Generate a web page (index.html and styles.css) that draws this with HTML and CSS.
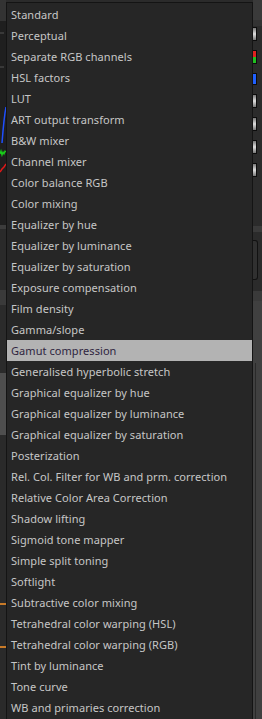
FILE: index.html
```html
<!DOCTYPE html>
<html>
<head>
<meta charset="utf-8">
<link rel="stylesheet" href="styles.css">
</head>
<body>
<div class="backdrop">
  <div class="strip strip-left">
    <div class="blk b-top"></div>
    <div class="blk b-histo">
      <svg width="6" height="204" viewBox="0 0 6 204">
        <line x1="0" y1="12" x2="4" y2="12" stroke="#555" stroke-width="1"/>
        <line x1="0" y1="46" x2="4" y2="46" stroke="#555" stroke-width="1"/>
        <polyline points="2,122 3,110 4,100 5,92 6,86" fill="none" stroke="#1f4fff" stroke-width="1.5"/>
        <polyline points="0,133 1,130 2,134 3,131 4,133 5,130 6,131" fill="none" stroke="#19d219" stroke-width="1.2"/>
        <polyline points="0,151 2,148 4,146 6,143" fill="none" stroke="#e01818" stroke-width="1.5"/>
      </svg>
    </div>
    <div class="blk b-sep"></div>
    <div class="blk b-dark1"></div>
    <div class="blk b-sep2"></div>
    <div class="blk b-dark2"></div>
    <div class="blk b-gray"></div>
    <div class="blk b-dark3">
      <div class="orange o1"></div>
      <div class="orange o2"></div>
    </div>
  </div>
  <div class="center"></div>
  <div class="strip strip-right">
    <div class="blk r-top"></div>
    <div class="blk r-band"></div>
    <div class="blk r-sliders">
      <div class="thumb t1"></div>
      <div class="thumb t2"></div>
      <div class="thumb t3"></div>
      <div class="thumb t4"></div>
      <div class="thumb t5"></div>
      <div class="thumb t6"></div>
      <div class="thumb t7"></div>
    </div>
    <div class="blk r-sep"></div>
    <div class="blk r-dark"><div class="rbox"></div></div>
    <div class="blk r-sep2"></div>
    <div class="blk r-gray"><div class="rline"></div></div>
  </div>
</div>

<ul class="menu">
  <li class="item">Standard</li>
  <li class="item">Perceptual</li>
  <li class="item">Separate RGB channels</li>
  <li class="item">HSL factors</li>
  <li class="item">LUT</li>
  <li class="item">ART output transform</li>
  <li class="item">B&amp;W mixer</li>
  <li class="item">Channel mixer</li>
  <li class="item">Color balance RGB</li>
  <li class="item">Color mixing</li>
  <li class="item">Equalizer by hue</li>
  <li class="item">Equalizer by luminance</li>
  <li class="item">Equalizer by saturation</li>
  <li class="item">Exposure compensation</li>
  <li class="item">Film density</li>
  <li class="item">Gamma/slope</li>
  <li class="item active">Gamut compression</li>
  <li class="item">Generalised hyperbolic stretch</li>
  <li class="item">Graphical equalizer by hue</li>
  <li class="item">Graphical equalizer by luminance</li>
  <li class="item">Graphical equalizer by saturation</li>
  <li class="item">Posterization</li>
  <li class="item">Rel. Col. Filter for WB and prm. correction</li>
  <li class="item">Relative Color Area Correction</li>
  <li class="item">Shadow lifting</li>
  <li class="item">Sigmoid tone mapper</li>
  <li class="item">Simple split toning</li>
  <li class="item">Softlight</li>
  <li class="item">Subtractive color mixing</li>
  <li class="item">Tetrahedral color warping (HSL)</li>
  <li class="item">Tetrahedral color warping (RGB)</li>
  <li class="item">Tint by luminance</li>
  <li class="item">Tone curve</li>
  <li class="item">WB and primaries correction</li>
</ul>
</body>
</html>
```
FILE: styles.css
```css
html, body {
  margin: 0;
  padding: 0;
  width: 262px;
  height: 719px;
  overflow: hidden;
  background: #2b2b2b;
  font-family: "Noto Sans", "Open Sans", sans-serif;
}

.backdrop {
  display: grid;
  grid-template-columns: 6px 1fr 9px;
  height: 719px;
}

.strip {
  display: flex;
  flex-direction: column;
}

.blk {
  flex: none;
  position: relative;
  overflow: hidden;
}

.b-top { height: 21px; background: #333333; }
.b-histo { height: 204px; background: #1f1f1f; }
.b-histo svg { display: block; }
.b-sep { height: 4px; background: #3c3c3c; }
.b-dark1 { height: 61px; background: #2a2a2a; }
.b-sep2 { height: 15px; background: #3a3a3a; }
.b-dark2 { height: 68px; background: #2b2b2b; }
.b-gray { height: 62px; background: #4e4e4e; }
.b-dark3 {
  flex: 1;
  background: #2a2a2a;
  display: flex;
  flex-direction: column;
  padding-top: 168px;
  gap: 41px;
}
.orange { height: 2px; width: 6px; background: #c87a28; }

.center { background: #2b2b2b; }

.r-top { height: 20px; background: #3a3a3a; }
.r-band { height: 6px; background: #333333; }
.r-sliders {
  height: 199px;
  background: #2b2b2b;
  display: flex;
  flex-direction: column;
  padding-top: 1px;
  gap: 9px;
}
.thumb {
  width: 3px;
  height: 12px;
  border: 1px solid #0c0c0c;
  border-left: none;
  background: linear-gradient(#777, #ddd 50%, #777);
}
.thumb.t2 { background: linear-gradient(#e02020 50%, #20c020 50%); }
.thumb.t3 { height: 10px; background: #2060ff; }
.r-sep { height: 6px; background: #3a3a3a; }
.r-dark {
  height: 59px;
  background: #2b2b2b;
  padding-top: 8px;
  box-sizing: border-box;
}
.rbox {
  width: 4px;
  height: 38px;
  border: 1px solid #111;
  border-left: none;
  border-radius: 0 3px 3px 0;
  background: #303030;
}
.r-sep2 { height: 10px; background: #3a3a3a; }
.r-gray {
  flex: 1;
  background: #404040;
  padding-top: 62px;
  box-sizing: border-box;
}
.rline {
  margin-left: 2px;
  width: 1px;
  height: 100%;
  background: #2a2a2a;
}

.menu {
  position: absolute;
  left: 6px;
  top: 2px;
  width: 247px;
  height: 717px;
  box-sizing: border-box;
  margin: 0;
  padding: 1px 0 0;
  list-style: none;
  background: #262626;
  border: 1px solid #141414;
  border-bottom: none;
  overflow: hidden;
}

.item {
  height: 21px;
  line-height: 21px;
  padding-left: 4px;
  font-size: 11px;
  letter-spacing: 0.06px;
  color: #c6c6c6;
  white-space: nowrap;
}

.item.active {
  background: #b3b3b3;
  color: #2f2540;
}
```
